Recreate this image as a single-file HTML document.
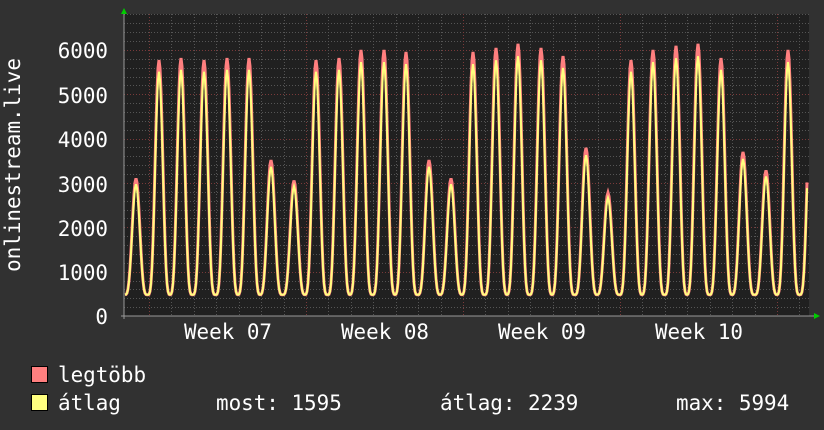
<!DOCTYPE html>
<html><head><meta charset="utf-8"><style>
body{margin:0;background:#313131;width:824px;height:430px;overflow:hidden;font-family:"DejaVu Sans Mono","Liberation Mono",monospace;}
svg{position:absolute;left:0;top:0}
text{font-family:"DejaVu Sans Mono","Liberation Mono",monospace;fill:#fff;font-size:20.9px}
</style></head><body>
<svg id="g" width="824" height="430" xmlns="http://www.w3.org/2000/svg">
<rect x="124" y="14" width="685" height="302" fill="#202020"/>
<g id="grid"></g>
<g id="data"></g>
<line x1="121" y1="316" x2="814" y2="316" stroke="#999" stroke-width="1"/>
<line x1="124" y1="10" x2="124" y2="319" stroke="#999" stroke-width="1"/>
<polygon points="121,14 127,14 124,8" fill="#0c0"/>
<polygon points="814,313 814,319 820,316" fill="#0c0"/>
<g text-anchor="end">
<text x="108" y="58">6000</text><text x="108" y="103">5000</text><text x="108" y="147">4000</text>
<text x="108" y="192">3000</text><text x="108" y="236">2000</text><text x="108" y="280">1000</text>
<text x="108" y="324">0</text>
</g>
<g text-anchor="middle">
<text x="228" y="339">Week 07</text><text x="385" y="339">Week 08</text>
<text x="542" y="339">Week 09</text><text x="699" y="339">Week 10</text>
</g>
<text transform="translate(20,165) rotate(-90)" text-anchor="middle">onlinestream.live</text>
<rect x="31.5" y="366.5" width="16" height="16" fill="#ff7f7f" stroke="#000"/>
<rect x="31.5" y="394.5" width="16" height="16" fill="#ffff7f" stroke="#000"/>
<text x="58" y="382">legtöbb</text>
<text x="58" y="410">átlag</text>
<text x="216" y="410">most: 1595</text>
<text x="440" y="410">átlag: 2239</text>
<text x="676" y="410">max: 5994</text>
</svg>
<script>
var NS="http://www.w3.org/2000/svg",gr=document.getElementById('grid'),dt=document.getElementById('data');
function ln(x1,y1,x2,y2,c){var l=document.createElementNS(NS,'line');l.setAttribute('x1',x1);l.setAttribute('y1',y1);l.setAttribute('x2',x2);l.setAttribute('y2',y2);l.setAttribute('stroke',c);l.setAttribute('stroke-dasharray','1,2');gr.appendChild(l);}
var Y=function(v){return 316-v*0.04435;};
for(var v=200;v<6900;v+=200){var y=Math.round(Y(v))+.5;ln(124,y,809,y,v%1000==0?'#7a3a3a':'#555');}
for(var x=149;x<809;x+=22.43){var xx=Math.round(x)+.5;var wk=Math.abs(((x-149)/157)-Math.round((x-149)/157))<0.01;ln(xx,14,xx,316,wk?'#7a3a3a':'#555');}
var P=[[136,2850],[159,5750],[181,5800],[204,5750],[227,5800],[249,5800],[271,3300],[294,2800],[316,5750],[339,5800],[361,6000],[384,6000],[406,5950],[429,3300],[451,2850],[473,5950],[496,6050],[518,6150],[541,6050],[563,5850],[586,3600],[608,2500],[631,5750],[653,6000],[676,6100],[698,6150],[721,5800],[743,3500],[766,3050],[788,6000],[811,5000]];
function val(x,sc){var best=0;for(var i=0;i<P.length;i++){var d=(x-P[i][0])/22.43;if(Math.abs(d)>0.6)continue;var c=Math.cos(d*Math.PI);if(c<0)c=0;var b=Math.pow(c,3.6);var v=P[i][1]*sc*b;if(v>best)best=v;}return 480+best*(1-480/6000);}
function pl(sc,col,w){var s='';for(var x=125;x<=807;x++){s+=x+','+Y(val(x,sc)).toFixed(1)+' ';}
var p=document.createElementNS(NS,'polyline');p.setAttribute('points',s);p.setAttribute('fill','none');p.setAttribute('stroke',col);p.setAttribute('stroke-width',w);dt.appendChild(p);}
pl(1,'#ff7f7f',3);pl(0.95,'#ffff7f',2);
</script>
</body></html>
